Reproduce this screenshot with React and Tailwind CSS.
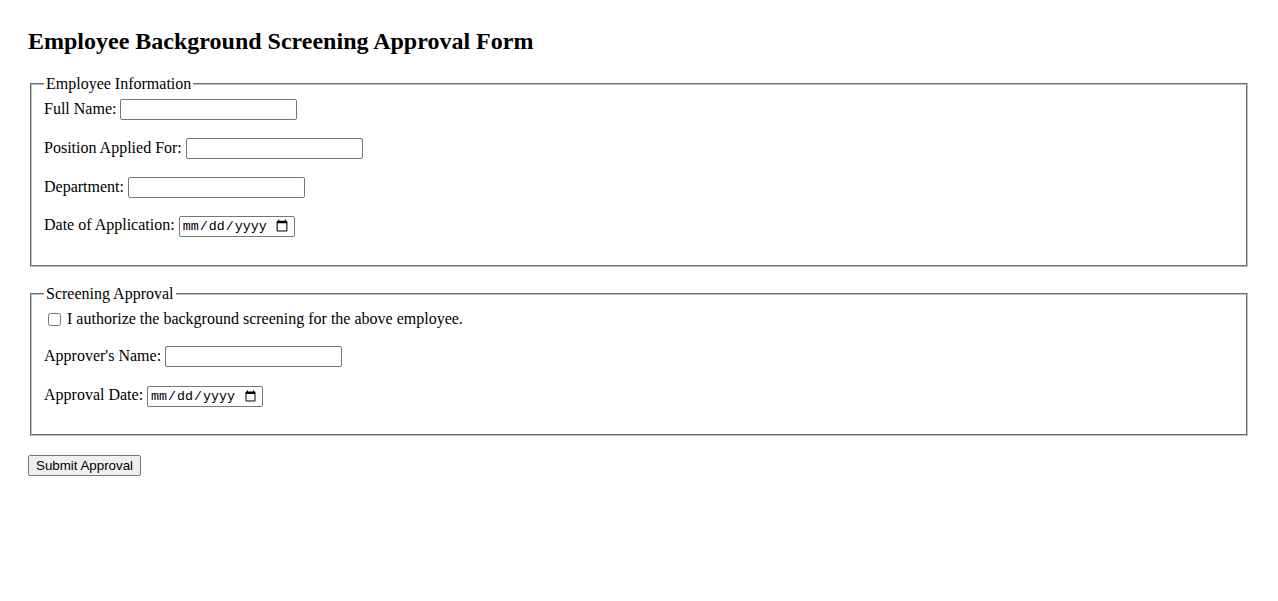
import React, { useState } from 'react';

const textInput =
  "w-[177px] h-[21px] border border-[#767676] rounded-[2px] px-[2px] bg-white align-baseline text-[13.33px] font-['Liberation_Sans',Arial,sans-serif]";
const dateInput =
  "w-[116px] h-[21px] border border-[#767676] rounded-[2px] pl-[2px] pr-[3px] bg-white align-baseline text-[13.33px] font-['Liberation_Mono',monospace]";

const Row = ({ label, children, className = '' }) => (
  <div className={`h-[21px] mb-[18px] flex items-baseline gap-[4px] whitespace-nowrap ${className}`}>
    <label>{label}</label>
    {children}
  </div>
);

const App = () => {
  const [form, setForm] = useState({
    fullName: '',
    position: '',
    department: '',
    applicationDate: '',
    authorized: false,
    approverName: '',
    approvalDate: '',
  });

  const handleChange = (e) => {
    const { name, value, type, checked } = e.target;
    setForm(prev => ({ ...prev, [name]: type === 'checkbox' ? checked : value }));
  };

  return (
    <div className="min-h-screen bg-white px-[28px] pt-[28px] text-black text-[16px] leading-[normal] font-['Liberation_Serif','Times_New_Roman',serif]">
      <h2 className="text-[24px] font-bold mb-[20px]">Employee Background Screening Approval Form</h2>

      <form onSubmit={(e) => e.preventDefault()}>
        {/* Employee info */}
        <fieldset className="mx-[2px] mb-[18px] px-[12px] pt-[5.6px] pb-[10px] [border:2px_groove_#c0c0c0]">
          <legend className="px-[2px]">Employee Information</legend>
          <Row label="Full Name:">
            <input type="text" name="fullName" value={form.fullName} onChange={handleChange} className={textInput} />
          </Row>
          <Row label="Position Applied For:">
            <input type="text" name="position" value={form.position} onChange={handleChange} className={textInput} />
          </Row>
          <Row label="Department:">
            <input type="text" name="department" value={form.department} onChange={handleChange} className={textInput} />
          </Row>
          <Row label="Date of Application:">
            <input type="date" name="applicationDate" value={form.applicationDate} onChange={handleChange} className={dateInput} />
          </Row>
        </fieldset>

        {/* Approval */}
        <fieldset className="mx-[2px] mb-[19px] px-[12px] pt-[5.6px] pb-[10px] [border:2px_groove_#c0c0c0]">
          <legend className="px-[2px]">Screening Approval</legend>
          <div className="h-[20px] pt-[2px] mb-[18px] flex items-center">
            <input
              type="checkbox"
              name="authorized"
              checked={form.authorized}
              onChange={handleChange}
              className="w-[13px] h-[13px] ml-[4px] mr-[6px]"
            />
            <label>I authorize the background screening for the above employee.</label>
          </div>
          <Row label="Approver's Name:">
            <input type="text" name="approverName" value={form.approverName} onChange={handleChange} className={textInput} />
          </Row>
          <Row label="Approval Date:" className="pt-[1px]">
            <input type="date" name="approvalDate" value={form.approvalDate} onChange={handleChange} className={dateInput} />
          </Row>
        </fieldset>

        <button
          type="submit"
          className="h-[21px] px-[7px] bg-[#efefef] border border-[#767676] rounded-[2px] text-[13.33px] leading-[normal] font-['Liberation_Sans',Arial,sans-serif] hover:bg-[#e5e5e5]"
        >
          Submit Approval
        </button>
      </form>
    </div>
  );
};

export default App;
